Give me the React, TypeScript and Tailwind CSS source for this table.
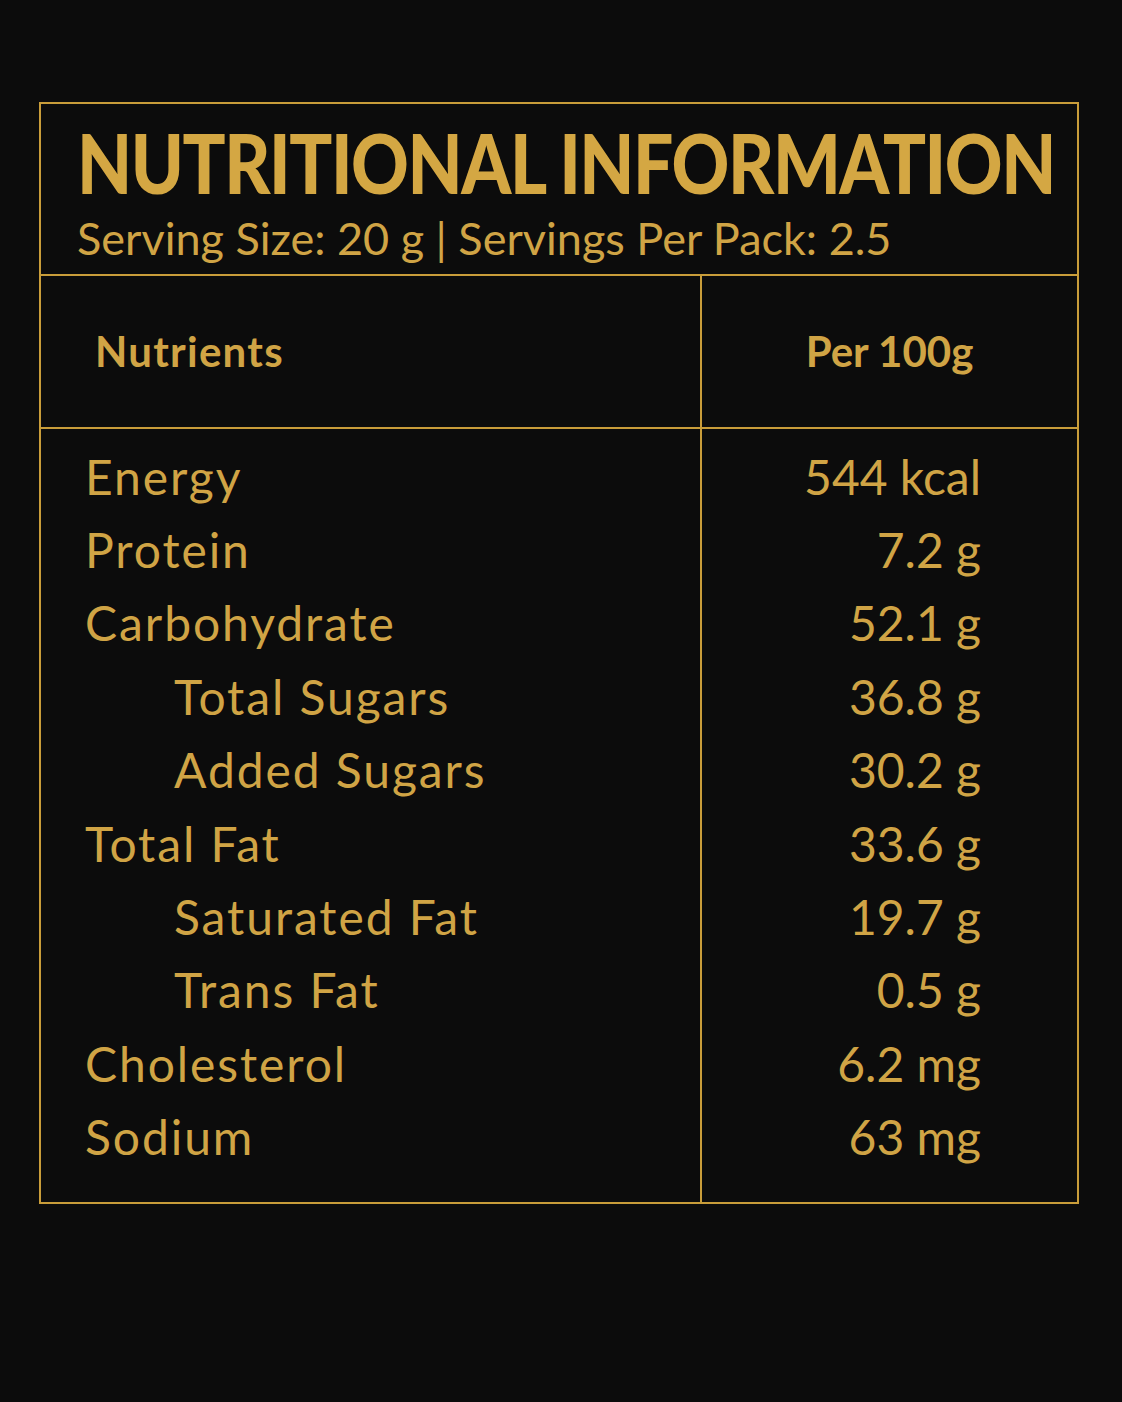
const rows: { name: string; value: string; indent?: boolean }[] = [
  { name: "Energy", value: "544 kcal" },
  { name: "Protein", value: "7.2 g" },
  { name: "Carbohydrate", value: "52.1 g" },
  { name: "Total Sugars", value: "36.8 g", indent: true },
  { name: "Added Sugars", value: "30.2 g", indent: true },
  { name: "Total Fat", value: "33.6 g" },
  { name: "Saturated Fat", value: "19.7 g", indent: true },
  { name: "Trans Fat", value: "0.5 g", indent: true },
  { name: "Cholesterol", value: "6.2 mg" },
  { name: "Sodium", value: "63 mg" },
];

export default function App() {
  return (
    <div
      className="min-h-[1402px] w-[1122px] bg-[#0c0c0c] pt-[102px] pl-[39px] text-[#d0a445]"
      style={{ fontFamily: "Lato, 'Open Sans', sans-serif" }}
    >
      <div className="w-[1040px] border-2 border-[#c99d3a]">
        {/* header */}
        <div className="border-b-2 border-[#c99d3a] pl-[36px] pt-[9px] pb-[9px]">
          <h1 className="origin-left scale-x-[0.87] whitespace-nowrap text-[82px] font-black leading-[98px] tracking-[-0.02em] text-[#d4a743]">
            NUTRITIONAL INFORMATION
          </h1>
          <p className="whitespace-nowrap text-[45px] leading-[54px]">
            Serving Size: 20 g | Servings Per Pack: 2.5
          </p>
        </div>

        {/* table */}
        <div className="grid grid-cols-[661px_1fr]">
          <div className="flex h-[153px] items-center border-b-2 border-r-2 border-[#c99d3a] pl-[54px]">
            <span className="text-[42px] font-bold tracking-[0.03em]">Nutrients</span>
          </div>
          <div className="flex h-[153px] items-center justify-center border-b-2 border-[#c99d3a]">
            <span className="text-[42px] font-bold">Per 100g</span>
          </div>

          <div className="border-r-2 border-[#c99d3a] pt-[11px] pb-[28px]">
            {rows.map((r) => (
              <div
                key={r.name}
                className={`flex h-[73.4px] items-center text-[48px] tracking-[0.04em] ${r.indent ? "pl-[133px]" : "pl-[44px]"}`}
              >
                {r.name}
              </div>
            ))}
          </div>
          <div className="pt-[11px] pb-[28px] pr-[96px]">
            {rows.map((r) => (
              <div key={r.name} className="flex h-[73.4px] items-center justify-end text-[48px]">
                {r.value}
              </div>
            ))}
          </div>
        </div>
      </div>
    </div>
  );
}
